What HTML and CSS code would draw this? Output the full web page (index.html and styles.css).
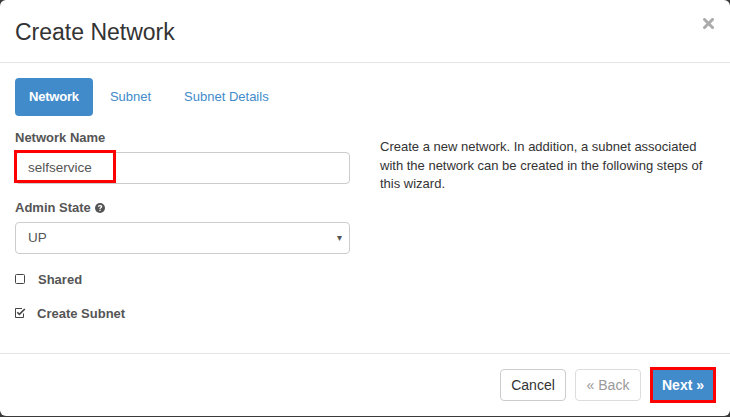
FILE: index.html
```html
<!DOCTYPE html>
<html>
<head>
<meta charset="utf-8">
<link rel="stylesheet" href="styles.css">
</head>
<body>
<div class="modal">
  <div class="modal-header">
    <h4 class="title">Create Network</h4>
    <svg class="close" width="11" height="11" viewBox="0 0 11 11"><path d="M1.5 1.5 L9.5 9.5 M9.5 1.5 L1.5 9.5" stroke="#ababab" stroke-width="3" stroke-linecap="square"/></svg>
  </div>
  <div class="modal-body">
    <div class="tabs">
      <span class="tab active">Network</span>
      <span class="tab">Subnet</span>
      <span class="tab">Subnet Details</span>
    </div>
    <div class="row">
      <div class="col">
        <div class="group">
          <label class="label">Network Name</label>
          <div class="input-wrap">
            <div class="input">selfservice</div>
            <div class="highlight highlight-input"></div>
          </div>
        </div>
        <div class="group">
          <label class="label">Admin State <svg class="help" width="10" height="10" viewBox="0 0 10 10"><circle cx="5" cy="5" r="5" fill="#555"/><path d="M3.4 3.8 C3.4 2.2 6.6 2.2 6.6 3.7 C6.6 4.8 5 4.8 5 5.9" stroke="#fff" stroke-width="1.3" fill="none"/><rect x="4.35" y="6.7" width="1.3" height="1.3" fill="#fff"/></svg></label>
          <div class="select">UP<span class="caret">&#9662;</span></div>
        </div>
        <div class="check">
          <svg width="10" height="10" viewBox="0 0 10 10"><rect x="0.5" y="0.5" width="9" height="9" rx="1" fill="none" stroke="#444" stroke-width="1"/></svg>
          <span class="check-label shared">Shared</span>
        </div>
        <div class="check">
          <svg width="11" height="10" viewBox="0 0 11 10"><path d="M8.5 5.5 V9.5 H0.5 V0.5 H7" fill="none" stroke="#444" stroke-width="1"/><path d="M2.3 4.3 L4.4 6.4 L9.8 1" fill="none" stroke="#444" stroke-width="1.6"/></svg>
          <span class="check-label">Create Subnet</span>
        </div>
      </div>
      <div class="col">
        <p class="help-text">Create a new network. In addition, a subnet associated with the network can be created in the following steps of this wizard.</p>
      </div>
    </div>
  </div>
  <div class="modal-footer">
    <button class="btn">Cancel</button>
    <button class="btn disabled">&laquo; Back</button>
    <div class="next-wrap">
      <button class="btn primary">Next &raquo;</button>
    </div>
  </div>
</div>
</body>
</html>
```

FILE: styles.css
```css
html, body {
  margin: 0;
  padding: 0;
  background: #3a3a3a;
}
body {
  font-family: "Liberation Sans", Arial, sans-serif;
  font-size: 13px;
  color: #333;
  width: 730px;
  height: 417px;
  overflow: hidden;
}
.modal {
  background: #fff;
  width: 730px;
  height: 416px;
  border-radius: 6px;
  display: flex;
  flex-direction: column;
  box-sizing: border-box;
}
.modal-header {
  height: 62px;
  border-bottom: 1px solid #e5e5e5;
  display: flex;
  align-items: center;
  justify-content: space-between;
  padding: 0 16px 0 15px;
  box-sizing: content-box;
}
.title {
  margin: 0;
  font-size: 23px;
  font-weight: normal;
  color: #333;
  position: relative;
  top: 1px;
}
.close {
  position: relative;
  top: -8px;
}
.modal-body {
  padding: 15px 15px 0 15px;
  flex: 1;
}
.tabs {
  display: flex;
  align-items: center;
  height: 38px;
}
.tab {
  color: #428bca;
  padding: 0 16px;
  line-height: 38px;
}
.tab.active {
  background: #428bca;
  color: #fff;
  font-weight: bold;
  border-radius: 4px;
  padding: 0 14px;
  letter-spacing: -0.2px;
}
.tab:nth-child(2) { padding-left: 17px; padding-right: 16px; }
.tab:nth-child(3) { padding-left: 17px; }
.row {
  display: flex;
  margin-top: 13px;
}
.col {
  width: 335px;
}
.col + .col {
  margin-left: 30px;
}
.group {
  margin-bottom: 15px;
}
.label {
  display: flex;
  align-items: center;
  gap: 4px;
  font-weight: bold;
  color: #555;
  line-height: 18px;
  margin-bottom: 5px;
}
.help {
  display: inline-block;
}
.input-wrap {
  position: relative;
}
.input, .select {
  height: 32px;
  border: 1px solid #ccc;
  border-radius: 4px;
  box-sizing: border-box;
  padding: 0 12px;
  line-height: 30px;
  color: #555;
  font-size: 13.5px;
}
.highlight {
  position: absolute;
  border: 3px solid #ff0000;
  box-sizing: border-box;
  pointer-events: none;
}
.highlight-input {
  left: -1px;
  top: -2px;
  width: 102px;
  height: 33px;
}
.select {
  display: flex;
  justify-content: space-between;
  align-items: center;
}
.caret {
  font-size: 10px;
  color: #555;
  margin-right: -5px;
}
.check {
  display: flex;
  align-items: center;
  height: 20px;
  margin-top: 1px;
  margin-bottom: 14px;
}
.check-label {
  font-weight: bold;
  color: #555;
  margin-left: 11px;
}
.check-label.shared {
  margin-left: 13px;
}
.help-text {
  margin: 0;
  padding-top: 9px;
  line-height: 18.5px;
  color: #333;
  font-size: 13px;
}
.modal-footer {
  border-top: 1px solid #e5e5e5;
  padding: 15px 14px 15px 15px;
  display: flex;
  justify-content: flex-end;
  align-items: center;
  gap: 9px;
  height: 32px;
}
.btn {
  font-family: "Liberation Sans", Arial, sans-serif;
  font-size: 14px;
  height: 32px;
  width: 66px;
  padding: 0;
  border: 1px solid #ccc;
  border-radius: 4px;
  background: #fff;
  color: #333;
}
.btn.disabled {
  color: #999;
  border-color: #ddd;
}
.next-wrap {
  border: 3px solid #ff0000;
  display: flex;
}
.btn.primary {
  background: #428bca;
  border: none;
  border-radius: 0;
  color: #fff;
  font-weight: bold;
  height: 30px;
  width: 60px;
  padding: 0;
}
```
